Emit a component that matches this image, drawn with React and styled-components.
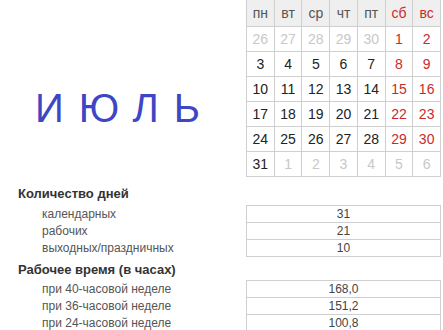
import React from "react";
import styled, { createGlobalStyle } from "styled-components";

const Global = createGlobalStyle`
  html, body { margin: 0; padding: 0; background: #fff; }
  body { font-family: Arial, "Liberation Sans", sans-serif; }
`;

const Page = styled.div`
  width: 443px;
  height: 330px;
  overflow: hidden;
`;

const Top = styled.div`
  display: flex;
  align-items: flex-start;
`;

const TitleArea = styled.div`
  width: 246px;
  display: flex;
  justify-content: center;
  padding-top: 83px;
`;

const Title = styled.div`
  font-size: 40px;
  color: #3d46c4;
  letter-spacing: 15px;
  line-height: 50px;
  padding-left: 4px;
`;

const Calendar = styled.div`
  width: 195px;
  display: grid;
  grid-template-columns: repeat(7, 1fr);
  border-left: 1px solid #cfcfcf;
  box-sizing: border-box;
`;

const Cell = styled.div`
  height: ${(p) => (p.$head ? 26 : 24)}px;
  border-right: 1px solid #cfcfcf;
  border-bottom: 1px solid #cfcfcf;
  display: flex;
  align-items: center;
  justify-content: center;
  font-size: 14px;
  background: ${(p) => (p.$head ? "#efefef" : "#fff")};
  color: ${(p) =>
    p.$fade ? "#c8c8c8" : p.$red ? "#cc2a2a" : p.$head ? "#555" : "#222"};
`;

const Section = styled.div`
  display: grid;
  grid-template-columns: 246px 195px;
  align-items: center;
  margin-top: ${(p) => p.$mt}px;
`;

const Heading = styled.div`
  grid-column: 1 / 3;
  font-size: 13px;
  font-weight: bold;
  color: #333;
  padding-left: 18px;
  height: ${(p) => p.$h}px;
  line-height: ${(p) => p.$lh}px;
`;

const Label = styled.div`
  font-size: 12px;
  color: #555;
  padding-left: 42px;
  line-height: 17px;
`;

const Value = styled.div`
  box-sizing: border-box;
  font-size: 12px;
  color: #444;
  text-align: center;
  height: 18px;
  line-height: 16px;
  border: 1px solid #cfcfcf;
  margin-top: ${(p) => (p.$first ? 0 : -1)}px;
`;

const heads = ["пн", "вт", "ср", "чт", "пт", "сб", "вс"];
const days = [
  [26, 1], [27, 1], [28, 1], [29, 1], [30, 1], [1], [2],
  [3], [4], [5], [6], [7], [8], [9],
  [10], [11], [12], [13], [14], [15], [16],
  [17], [18], [19], [20], [21], [22], [23],
  [24], [25], [26], [27], [28], [29], [30],
  [31], [1, 1], [2, 1], [3, 1], [4, 1], [5, 1], [6, 1],
];

const sections = [
  {
    title: "Количество дней",
    mt: 8,
    h: 20,
    lh: 18,
    rows: [
      ["календарных", "31"],
      ["рабочих", "21"],
      ["выходных/праздничных", "10"],
    ],
  },
  {
    title: "Рабочее время (в часах)",
    mt: 0,
    h: 23,
    lh: 26,
    rows: [
      ["при 40-часовой неделе", "168,0"],
      ["при 36-часовой неделе", "151,2"],
      ["при 24-часовой неделе", "100,8"],
    ],
  },
];

export default function App() {
  return (
    <Page>
      <Global />
      <Top>
        <TitleArea>
          <Title>ИЮЛЬ</Title>
        </TitleArea>
        <Calendar>
          {heads.map((h, i) => (
            <Cell key={h} $head $red={i >= 5}>
              {h}
            </Cell>
          ))}
          {days.map(([d, fade], i) => (
            <Cell key={i} $fade={!!fade} $red={i % 7 >= 5}>
              {d}
            </Cell>
          ))}
        </Calendar>
      </Top>
      {sections.map((s) => (
        <Section key={s.title} $mt={s.mt}>
          <Heading $h={s.h} $lh={s.lh}>{s.title}</Heading>
          {s.rows.map(([l, v], i) => (
            <React.Fragment key={l}>
              <Label>{l}</Label>
              <Value $first={i === 0}>{v}</Value>
            </React.Fragment>
          ))}
        </Section>
      ))}
    </Page>
  );
}
